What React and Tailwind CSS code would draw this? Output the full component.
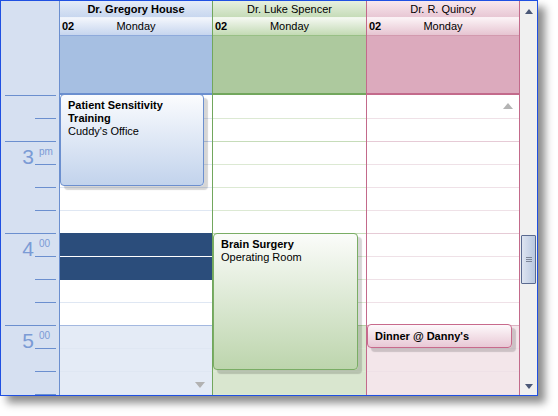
import React from 'react';

// Day view: three doctors side by side, 2:30pm - 6pm
const doctors = [
  {
    name: 'Dr. Gregory House',
    bold: true,
    col: 'w-[153px] border-l border-[#6b8fcf]',
    nameBg: 'bg-linear-to-b from-[#e4ecf8] to-[#c8d7ef] border-[#eef3fb]',
    dayBg: 'bg-linear-to-b from-[#f3f6fc] to-[#c6d5ee] border-[#8eaadb]',
    allDay: 'bg-[#a6bfe2] border-[#6b8fcf]',
    line: 'border-[#dfe7f3]',
    hour: 'border-[#c3d2ec]',
    off: 'bg-[#e4ebf6]',
    offHour: 'border-[#a3b8e0]',
  },
  {
    name: 'Dr. Luke Spencer',
    col: 'w-[154px] border-l border-[#72a75d]',
    nameBg: 'bg-linear-to-b from-[#e6f0e0] to-[#c6dcb8] border-[#f1f7ed]',
    dayBg: 'bg-linear-to-b from-[#f4f8f1] to-[#c3dab4] border-[#98bf86]',
    allDay: 'bg-[#adc99e] border-[#72a75d]',
    line: 'border-[#dce9d3]',
    hour: 'border-[#c6dcb9]',
    off: 'bg-[#d9e6cf]',
    offHour: 'border-[#b3cfa4]',
  },
  {
    name: 'Dr. R. Quincy',
    col: 'w-[154px] border-x border-[#c36a8b]',
    nameBg: 'bg-linear-to-b from-[#f8e8ee] to-[#e8c7d4] border-[#fbf1f5]',
    dayBg: 'bg-linear-to-b from-[#fbf3f6] to-[#e6c4d1] border-[#d29aae]',
    allDay: 'bg-[#dcaabd] border-[#c36a8b]',
    line: 'border-[#efe1e7]',
    hour: 'border-[#e6cbd6]',
    off: 'bg-[#f3e6ea]',
    offHour: 'border-[#dcb3c3]',
  },
];

// 13 quarter rows, first one is 1px taller
const rows = Array.from({ length: 13 }, (_, i) => i);

const Tri = ({ up, className, fill }) => (
  <svg className={className} width="10" height="6" viewBox="0 0 10 6">
    <polygon points={up ? '5,0 10,6 0,6' : '0,0 10,0 5,6'} fill={fill} />
  </svg>
);

const Event = ({ className, title, sub }) => (
  <div className={`absolute rounded-[4px] border px-[7px] text-[11px] leading-[13px] text-black shadow-[4px_4px_1px_rgba(0,0,0,0.16)] ${className}`}>
    <div className="font-bold">{title}</div>
    {sub && <div>{sub}</div>}
  </div>
);

const HourGroup = ({ digit, sup, last }) => (
  <div className={`flex ${last ? 'h-[69px]' : 'h-[92px] border-b border-[#6b8fcf]'}`}>
    <div className="w-[29px] pt-[4px] text-right text-[21px] leading-none text-[#7b9bd5]">{digit}</div>
    <div className="ml-auto flex w-[21px] flex-col">
      <div className="h-[23px] border-b border-[#6b8fcf] pl-[4px] pt-[4px] text-[10px] leading-[12px] text-[#7b9bd5]">{sup}</div>
      <div className="h-[23px] border-b border-[#6b8fcf]" />
      <div className="h-[23px] border-b border-[#6b8fcf]" />
    </div>
  </div>
);

const TimeColumn = () => (
  <div className="flex w-[58px] flex-col bg-[#d6e0f1]">
    <div className="h-[94px]" />
    <div className="ml-[4px] mr-[3px] border-t border-[#6b8fcf]">
      <div className="ml-auto h-[23px] w-[21px] border-b border-[#6b8fcf]" />
      <div className="h-[23px] border-b border-[#6b8fcf]" />
      <HourGroup digit="3" sup="pm" />
      <HourGroup digit="4" sup="00" />
      <HourGroup digit="5" sup="00" last />
    </div>
  </div>
);

const DoctorColumn = ({ doc, index, children }) => (
  <div className={`flex flex-col ${doc.col}`}>
    <div className={`flex h-[17px] items-center justify-center border-b text-[11px] ${doc.nameBg} ${doc.bold ? 'font-bold' : ''}`}>
      {doc.name}
    </div>
    <div className={`grid h-[18px] grid-cols-[1fr_auto_1fr] items-center border-b text-[11px] ${doc.dayBg}`}>
      <span className="pl-[2px] font-bold">02</span>
      <span>Monday</span>
      <span />
    </div>
    <div className={`h-[59px] border-b-2 ${doc.allDay}`} />
    <div className="relative flex-1">
      {rows.map((r) => {
        const sel = index === 0 && (r === 6 || r === 7);
        const selEdge = index === 0 && r === 5;
        let border = r === 1 || r === 5 ? doc.hour : r === 9 ? doc.offHour : doc.line;
        if (sel) border = r === 6 ? 'border-white' : 'border-[#2b4d7b]';
        if (selEdge) border = 'border-[#2b4d7b]';
        const bg = sel ? 'bg-[#2b4d7b]' : r >= 10 ? doc.off : 'bg-white';
        return <div key={r} className={`border-b ${r === 0 ? 'h-[24px]' : 'h-[23px]'} ${border} ${bg}`} />;
      })}
      {children}
    </div>
  </div>
);

const ScrollBar = () => (
  <div className="flex w-[17px] flex-col bg-[#f0f0f0]">
    <div className="flex h-[17px] items-start justify-center pt-[8px]">
      <svg width="8" height="5" viewBox="0 0 8 5"><polygon points="4,0 8,5 0,5" fill="#4b5877" /></svg>
    </div>
    <div className="flex-1 pt-[217px]">
      <div className="mx-auto flex h-[49px] w-[15px] flex-col items-center justify-center gap-[1px] rounded-[1px] border border-[#5a6a90] bg-linear-to-r from-[#dde4f0] to-[#b9c8e0]">
        <div className="h-px w-[6px] bg-[#7d8698]" />
        <div className="h-px w-[6px] bg-[#7d8698]" />
        <div className="h-px w-[6px] bg-[#7d8698]" />
      </div>
    </div>
    <div className="flex h-[17px] items-start justify-center pt-[6px]">
      <svg width="8" height="5" viewBox="0 0 8 5"><polygon points="0,0 8,0 4,5" fill="#4b5877" /></svg>
    </div>
  </div>
);

export default function App() {
  return (
    <div className="h-[416px] w-[558px] bg-white font-[Liberation_Sans,Arial,sans-serif] text-black">
      <div className="flex h-[396px] w-[538px] border border-[#1f50e2] bg-white shadow-[7px_7px_8px_rgba(0,0,0,0.45)]">
        <TimeColumn />
        <DoctorColumn doc={doctors[0]} index={0}>
          <Event
            className="left-0 top-[-1px] h-[92px] w-[144px] border-[#6b8fcf] bg-linear-to-b from-[#fbfcfe] to-[#c2d3ec] pt-[4px]"
            title="Patient Sensitivity Training"
            sub="Cuddy's Office"
          />
          <Tri className="absolute left-[135px] top-[287px]" fill="#b2b2b2" />
        </DoctorColumn>
        <DoctorColumn doc={doctors[1]} index={1}>
          <Event
            className="left-0 top-[138px] h-[137px] w-[145px] border-[#7aad65] bg-linear-to-b from-[#fbfcfa] to-[#bdd5ad] pt-[4px]"
            title="Brain Surgery"
            sub="Operating Room"
          />
        </DoctorColumn>
        <DoctorColumn doc={doctors[2]} index={2}>
          <Tri up className="absolute left-[136px] top-[8px]" fill="#b4b4b4" />
          <Event
            className="left-0 top-[229px] flex h-[24px] w-[145px] items-center border-[#c86a8c] bg-linear-to-b from-[#fdf9fb] to-[#e8c8d5]"
            title="Dinner @ Danny's"
          />
        </DoctorColumn>
        <ScrollBar />
      </div>
    </div>
  );
}
